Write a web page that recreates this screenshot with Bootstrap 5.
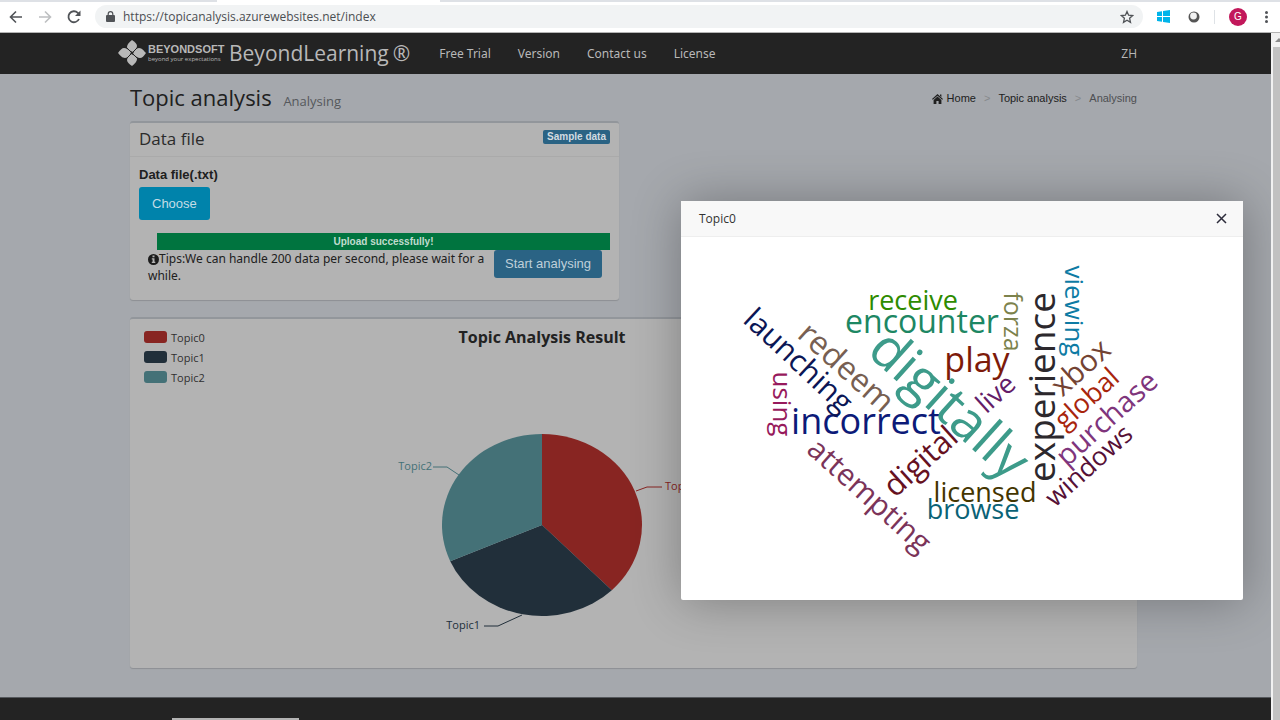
<!DOCTYPE html>
<html lang="en">
<head>
<meta charset="utf-8">
<meta name="viewport" content="width=device-width, initial-scale=1">
<title>Topic analysis</title>
<link href="https://cdn.jsdelivr.net/npm/bootstrap@5.3.0/dist/css/bootstrap.min.css" rel="stylesheet">
<style>
  body { font-family: "Open Sans", "Noto Sans", sans-serif; font-size: 12px; line-height: 17px; color: #202020; height: 100vh; }
  a { color: inherit; text-decoration: none; }
  .arial { font-family: "Liberation Sans", Arial, sans-serif; }
  .noto { font-family: "Noto Sans", "Open Sans", sans-serif; }
  .tab-strip { height: 2px; background: #dee1e6; }
  .tab-gap { width: 217px; }
  .tab-active { width: 223px; background: #fff; }
  .toolbar-row { height: 31px; background: #fff; border-bottom: 1px solid #b4b4b4; padding: 0 12px 0 8px; }
  .nav-tools { gap: 13px; margin-right: 13px; }
  .side-tools { gap: 14px; margin-left: 14px; }
  .tool { padding: 0; border: 0; background: none; width: 16px; height: 16px; line-height: 0; }
  .address { height: 23px; background: #f1f3f4; border-radius: 12px; padding: 0 8px 0 11px; }
  .address input { border: 0; background: none; outline: 0; font-size: 12px; color: #4b4e52; padding: 0; }
  .avatar { width: 18px; height: 18px; border-radius: 50%; background: #c2185b; color: #fff; font-size: 10px; }
  .page { background: #a5a8ad; overflow: hidden; }
  .scroll-track { width: 9px; background: #f1f1f1; padding-left: 2px; }
  .scroll-thumb { background: #c1c1c1; }
  .wrap { max-width: 1039px; margin: 0 auto; padding: 0 18px 0 14px; }
  .top-nav { background: #232323; height: 41px; color: #b8b8b8; }
  .top-nav .wrap { padding-left: 2px; height: 41px; }
  .brand-text { width: 81px; margin-left: 2px; }
  .product { font-size: 21px; line-height: 30px; }
  .logo-name { font-size: 11px; line-height: 12px; font-weight: 700; }
  .logo-line { font-size: 6px; line-height: 9px; }
  .menu { gap: 27px; margin-left: 29px; }
  .page-head { height: 47px; padding-top: 3px; }
  .page-head h1 { font-size: 22px; line-height: 30px; margin: 0; }
  .page-head small { font-size: 13px; color: #55585c; margin-left: 6px; }
  .crumbs { --bs-breadcrumb-divider: ">"; --bs-breadcrumb-divider-color: #85888c; --bs-breadcrumb-item-active-color: #4d4f52; --bs-breadcrumb-item-padding-x: 8px; font-size: 11px; }
  .panel { background: #b3b3b3; border: 0; border-top: 2px solid #92969b; border-radius: 3px; box-shadow: 0 1px 1px rgba(0,0,0,.15); }
  .panel-title { height: 34px; padding: 0 9px; border-bottom: 1px solid #aaa; }
  .panel-title h2 { font-size: 17px; margin: 0; line-height: 20px; color: #2b2b2b; }
  .upload { width: 489px; height: 179px; margin-bottom: 17px; }
  .upload .panel-body { padding: 9px; }
  .field-name { font-size: 13px; }
  .sample { background: #2a6384; color: #d2dbe0; font-size: 10px; line-height: 14px; padding: 0 4px; border-radius: 2px; margin-top: -5px; }
  .btn-choose { background: #0083ab; color: #c4dde6; font-size: 13px; line-height: 21px; padding: 6px 13px; border-radius: 3px; border: 0; }
  .btn-start { background: #2a6384; color: #bfd0da; font-size: 13px; line-height: 16px; padding: 6px 11px; border-radius: 3px; border: 0; }
  .bar-ok { --bs-progress-bg: #00743f; --bs-progress-bar-bg: #00743f; --bs-progress-bar-color: #c0dccf; --bs-progress-height: 17px; --bs-progress-font-size: 10px; border-radius: 0; margin: 13px 0 0 18px; }
  .tips { padding-left: 9px; }
  .result { height: 351px; margin-bottom: 29px; padding: 7px 14px; }
  .result-inner { max-width: 796px; }
  .result h2 { font-size: 16px; line-height: 22px; font-weight: 700; color: #222; margin: 0; }
  .legend-list { gap: 3px; padding-top: 3px; font-size: 11px; color: #303030; }
  .swatch { width: 23px; height: 12px; border-radius: 3px; margin-right: 4px; }
  .chart { display: block; width: 100%; margin-top: 40px; font-size: 11px; }
  .foot { background: #232323; border-top: 1px solid #55585c; }
  .foot .tile { width: 127px; height: 60px; background: #b3b3b3; margin: 20px 0 0 42px; }
  .topic-window { position: absolute; top: 168px; right: 28px; width: 562px; background: #fff; border-radius: 2px; box-shadow: 1px 1px 50px rgba(0,0,0,.3); }
  .topic-title { height: 36px; background: #f8f8f8; border-bottom: 1px solid #eee; padding: 0 14px 0 18px; color: #333; }
  .cloud { display: block; width: 100%; }
  .cloud text { text-anchor: middle; }
</style>
</head>
<body class="d-flex flex-column overflow-hidden">
<div class="tab-strip d-flex"><div class="tab-gap"></div><div class="tab-active"></div></div>
<div class="toolbar-row d-flex align-items-center flex-shrink-0">
  <div class="nav-tools d-flex">
    <button class="tool" aria-label="Back"><svg width="16" height="16" viewBox="0 0 16 16" fill="none" stroke="#505357" stroke-width="1.6"><path d="M14 8H3M8 2.5 2.5 8 8 13.5"/></svg></button>
    <button class="tool" aria-label="Forward"><svg width="16" height="16" viewBox="0 0 16 16" fill="none" stroke="#bdbfc1" stroke-width="1.6"><path d="M2 8h11M8 2.5 13.500 8 8 13.500"/></svg></button>
    <button class="tool" aria-label="Reload"><svg width="16" height="16" viewBox="0 0 16 16" fill="none" stroke="#505357" stroke-width="1.8"><path d="M13 10a5.500 5.500 0 1 1-1.200-6.200L13.500 5.500"/><path d="M14.500 1.500v5.500H9z" fill="#505357" stroke="none"/></svg></button>
  </div>
  <div class="address d-flex align-items-center flex-grow-1">
    <svg width="9" height="11" viewBox="0 0 9 11"><path d="M1 4h7a1 1 0 0 1 1 1v5a1 1 0 0 1-1 1H1a1 1 0 0 1-1-1V5a1 1 0 0 1 1-1z" fill="#505357"/><path d="M2.200 4.500V3a2.300 2.300 0 0 1 4.600 0v1.500" fill="none" stroke="#505357" stroke-width="1.200"/></svg>
    <input class="flex-grow-1 ms-2 ps-0" type="text" aria-label="Address" value="https://topicanalysis.azurewebsites.net/index">
    <button class="tool" aria-label="Bookmark"><svg width="14" height="14" viewBox="0 0 14 14" fill="none" stroke="#505357" stroke-width="1.300"><path d="m7 1.500 1.600 3.700 4 .4-3 2.700.9 4L7 10.200l-3.500 2.100.9-4-3-2.700 4-.4z"/></svg></button>
  </div>
  <div class="side-tools d-flex align-items-center">
    <svg width="13" height="13" viewBox="0 0 13 13" fill="#00b4ea"><path d="M0 2 5 1.300V6H0zM6 1.100 13 0v6H6zM0 7h5v4.700L0 11zM6 7h7v6L6 11.900z"/></svg>
    <svg class="ms-1" width="12" height="12" viewBox="0 0 12 12"><circle cx="6" cy="6" r="5.500" fill="#555"/><circle cx="5.500" cy="5" r="3.400" fill="#f2f2f2"/></svg>
    <div class="border-start" style="height:14px"></div>
    <button class="avatar arial border-0 p-0">G</button>
    <svg class="ms-1" width="3" height="12" viewBox="0 0 3 12" fill="#505357"><circle cx="1.500" cy="1.500" r="1.500"/><circle cx="1.500" cy="6" r="1.500"/><circle cx="1.500" cy="10.500" r="1.500"/></svg>
  </div>
</div>

<div class="d-flex flex-grow-1 overflow-hidden">
  <div class="page position-relative d-flex flex-column flex-grow-1">
    <nav class="top-nav flex-shrink-0">
      <div class="wrap d-flex align-items-center">
        <a href="#" class="d-flex align-items-center">
          <svg width="28" height="26" viewBox="0 0 28 26" fill="#b8b8b8"><path d="M14 0c3 2 5 4 5 6s-2 4-4 6c-3-1-6-3-6-5s2-5 5-7z"/><path d="M14 26c-3-2-5-4-5-6s2-4 4-6c3 1 6 3 6 5s-2 5-5 7z"/><path d="M0 13c2-3 4-5 6-5s5 2 7 4c-1 3-3 6-6 6s-5-3-7-5z"/><path d="M28 13c-2 3-4 5-6 5s-5-2-7-4c1-3 3-6 6-6s5 3 7 5z"/><path d="m9 8 10 10M19 8 9 18" stroke="#232323"/></svg>
          <span class="brand-text d-flex flex-column"><span class="logo-name arial text-nowrap">BEYONDSOFT</span><span class="logo-line text-nowrap">beyond your expectations</span></span>
          <span class="product">BeyondLearning<span class="ms-1">®</span></span>
        </a>
        <div class="menu noto d-flex"><a href="#">Free Trial</a><a href="#">Version</a><a href="#">Contact us</a><a href="#">License</a></div>
        <a href="#" class="ms-auto">ZH</a>
      </div>
    </nav>

    <main class="wrap w-100">
      <header class="page-head d-flex align-items-center justify-content-between">
        <h1>Topic analysis <small>Analysing</small></h1>
        <ol class="breadcrumb crumbs arial mb-0">
          <li class="breadcrumb-item"><a href="#"><svg class="me-1" width="11" height="10" viewBox="0 0 11 10" fill="#202020"><path d="M5.500 0 11 5l-.8.800L5.500 1.800.8 5.800 0 5zM5.500 2.600 9.400 6v4H6.600V7H4.400v3H1.600V6zM8 .5h1.400v2.400L8 1.700z"/></svg>Home</a></li>
          <li class="breadcrumb-item"><a href="#">Topic analysis</a></li>
          <li class="breadcrumb-item active">Analysing</li>
        </ol>
      </header>

      <section class="panel upload">
        <div class="panel-title d-flex align-items-center justify-content-between">
          <h2>Data file</h2><a href="#" class="sample arial fw-bold">Sample data</a>
        </div>
        <div class="panel-body">
          <div class="field-name arial fw-bold mb-1">Data file(.txt)</div>
          <button class="btn-choose arial d-block">Choose</button>
          <div class="progress bar-ok"><div class="progress-bar w-100 arial fw-bold">Upload successfully!</div></div>
          <div class="d-flex align-items-start">
            <div class="tips noto flex-grow-1"><svg width="11" height="11" viewBox="0 0 11 11"><circle cx="5.500" cy="5.500" r="5.500" fill="#1c1c1c"/><path d="M4.500 1.600h2v1.600h-2zM3.800 4.300h2.700v3.500h.8v1.300H3.800V7.800h.8V5.600h-.8z" fill="#b3b3b3"/></svg>Tips:We can handle 200 data per second, please wait for a while.</div>
            <button class="btn-start arial me-2 flex-shrink-0">Start analysing</button>
          </div>
        </div>
      </section>

      <section class="panel result">
        <div class="result-inner">
          <div class="row g-0">
            <div class="col legend-list d-flex flex-column">
              <div class="d-flex align-items-center"><span class="swatch" style="background:#882522"></span>Topic0</div>
              <div class="d-flex align-items-center"><span class="swatch" style="background:#212f3a"></span>Topic1</div>
              <div class="d-flex align-items-center"><span class="swatch" style="background:#447177"></span>Topic2</div>
            </div>
            <div class="col-auto"><h2>Topic Analysis Result</h2></div>
            <div class="col"></div>
          </div>
          <svg class="chart" viewBox="0 0 796 220" role="img" aria-label="Topic shares"></svg>
        </div>
      </section>
    </main>

    <footer class="foot flex-grow-1"><div class="wrap"><div class="tile"></div></div></footer>

    <div class="topic-window" role="dialog" aria-label="Topic0">
      <div class="topic-title d-flex align-items-center justify-content-between">
        <span>Topic0</span>
        <button class="tool" aria-label="Close"><svg width="11" height="11" viewBox="0 0 11 11" stroke="#2d2c3b" stroke-width="1.500"><path d="m1 1 9 9M10 1 1 10"/></svg></button>
      </div>
      <svg class="cloud" viewBox="0 0 562 363"></svg>
    </div>
  </div>
  <div class="scroll-track flex-shrink-0">
    <svg class="d-block" width="7" height="14" viewBox="0 0 7 14" fill="#8a8a8a"><path d="m2 9 4-4 4 4z"/></svg>
    <div class="scroll-thumb h-100"></div>
  </div>
</div>
<script src="https://cdn.jsdelivr.net/npm/bootstrap@5.3.0/dist/js/bootstrap.bundle.min.js"></script>
<script>
  // word, centre x, centre y, angle, size, colour, weight
  const words = [
    ["receive", 232, 66, 0, 27, "#2e8b00"], ["encounter", 241, 87, 0, 32, "#1d8763"],
    ["play", 296, 126, 0, 34, "#7d1a0a"], ["incorrect", 185, 187, 0, 36, "#0c1a78"],
    ["licensed", 304, 258, 0, 27, "#443500"], ["browse", 292, 275, 0, 27, "#0a6276"],
    ["experience", 364, 150, -90, 37, "#2c282d"], ["viewing", 391, 74, 90, 26, "#0d7ba4"],
    ["forza", 330, 85, 90, 25, "#7c824c"], ["using", 99, 167, 90, 26, "#971a5c"],
    ["launching", 116, 125, 43, 30, "#0b1655"], ["redeem", 164, 132, 42, 32, "#775f52"],
    ["digitally", 266, 170, 42, 54, "#3d9b8a", 500], ["attempting", 187, 260, 42, 30, "#7b3459"],
    ["digital", 241, 226, -42, 31, "#66111f"], ["live", 316, 158, -42, 27, "#641d68"],
    ["xbox", 401, 132, -42, 30, "#744333"], ["global", 407, 163, -42, 27, "#a8250c"],
    ["purchase", 427, 183, -42, 29, "#7f357c"], ["windows", 409, 230, -42, 26, "#561036"]
  ];
  const cloud = document.querySelector(".cloud");
  for (const [word, x, y, angle, size, colour, weight = 400] of words) {
    const t = document.createElementNS("http://www.w3.org/2000/svg", "text");
    t.textContent = word;
    t.setAttribute("transform", `translate(${x} ${y}) rotate(${angle})`);
    t.setAttribute("dy", "0.27em");
    t.setAttribute("font-size", size);
    t.setAttribute("font-weight", weight);
    t.setAttribute("fill", colour);
    cloud.append(t);
  }

  // pie: share of each topic, drawn clockwise from the top
  const slices = [
    { name: "Topic0", share: 0.377, colour: "#882522", line: "492,65 503,61 518,61", x: 521, y: 64, anchor: "start" },
    { name: "Topic1", share: 0.308, colour: "#212f3a", line: "378,189 354,200 340,200", x: 336, y: 203, anchor: "end" },
    { name: "Topic2", share: 0.315, colour: "#447177", line: "315,49 303,41 289,41", x: 288, y: 44, anchor: "end" }
  ];
  let turn = 0, art = "";
  const at = t => `${398 + 100 * Math.sin(t * 2 * Math.PI)} ${99 - 91 * Math.cos(t * 2 * Math.PI)}`;
  for (const s of slices) {
    art += `<path d="M398 99L${at(turn)}A100 91 0 0 1 ${at(turn + s.share)}z" fill="${s.colour}"/>
      <polyline points="${s.line}" fill="none" stroke="${s.colour}"/>
      <text x="${s.x}" y="${s.y}" fill="${s.colour}" text-anchor="${s.anchor}">${s.name}</text>`;
    turn += s.share;
  }
  document.querySelector(".chart").innerHTML = art;
</script>
</body>
</html>
